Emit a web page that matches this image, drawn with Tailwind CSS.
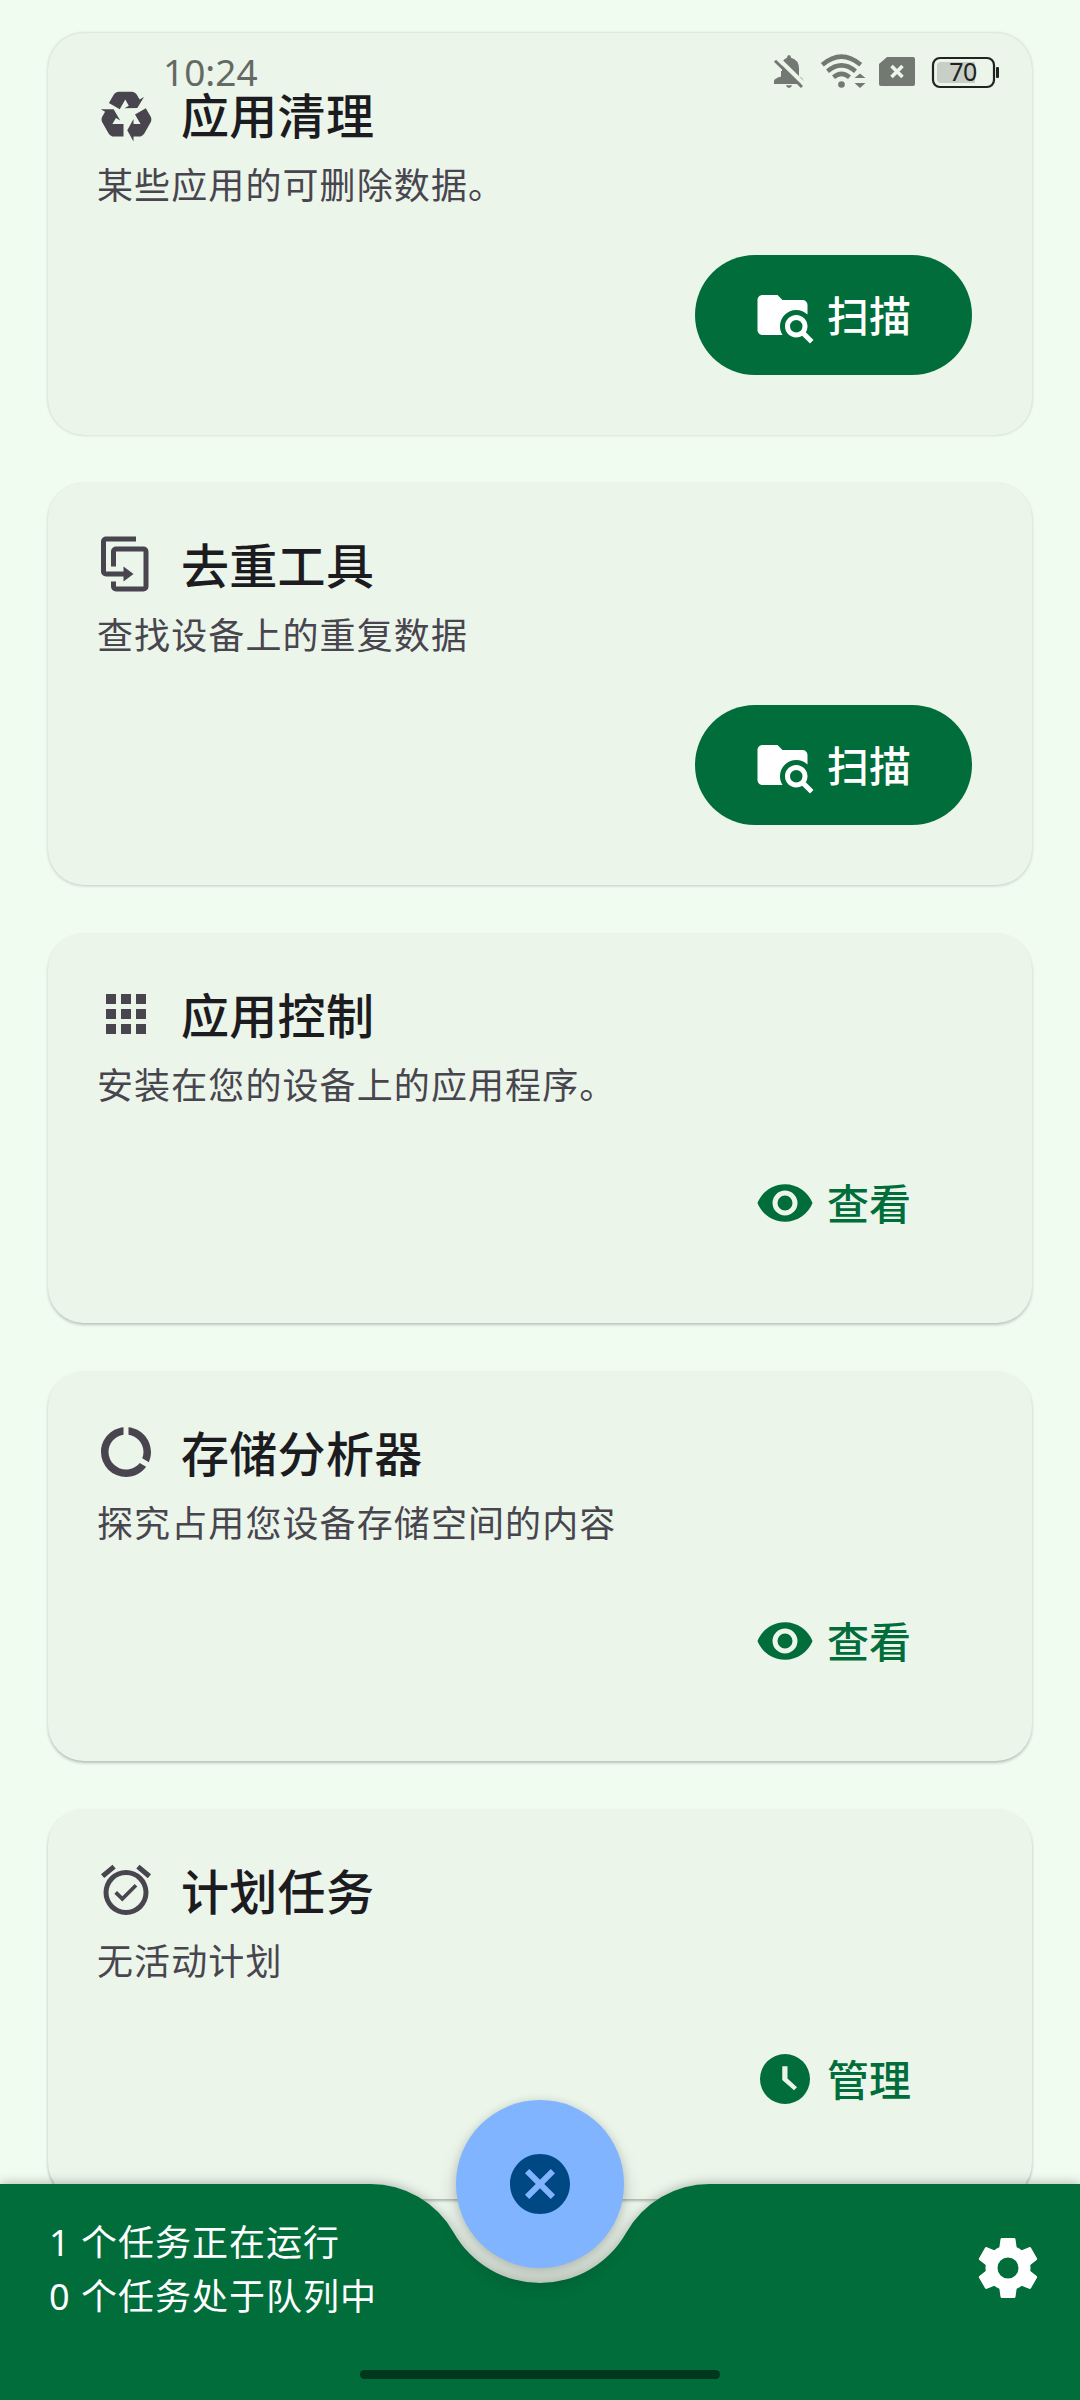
<!DOCTYPE html>
<html lang="zh-CN">
<head>
<meta charset="utf-8">
<title>SD Maid</title>
<script src="https://cdn.jsdelivr.net/npm/@tailwindcss/browser@4"></script>
</head>
<body class="relative h-[2400px] w-[1080px] overflow-hidden bg-[#f1fcf1] font-['Noto_Sans','Noto_Sans_CJK_SC',sans-serif] text-[#1c1b1f]">

<svg class="hidden">
  <symbol id="scan" viewBox="0 0 24 24"><path d="M16.5,12C19,12 21,14 21,16.5C21,17.38 20.75,18.21 20.31,18.9L23.39,22L22,23.39L18.88,20.32C18.19,20.75 17.37,21 16.5,21C14,21 12,19 12,16.5C12,14 14,12 16.5,12M16.5,14A2.5,2.5 0 0,0 14,16.5A2.5,2.5 0 0,0 16.5,19A2.5,2.5 0 0,0 19,16.5A2.5,2.5 0 0,0 16.5,14M9,4L11,6H19A2,2 0 0,1 21,8V11.81C19.83,10.69 18.25,10 16.5,10A6.5,6.5 0 0,0 10,16.5C10,17.79 10.37,19 11,20H3C1.89,20 1,19.1 1,18V6C1,4.89 1.89,4 3,4H9Z"/></symbol>
  <symbol id="eye" viewBox="0 0 24 24"><path d="M12,9A3,3 0 0,0 9,12A3,3 0 0,0 12,15A3,3 0 0,0 15,12A3,3 0 0,0 12,9M12,17A5,5 0 0,1 7,12A5,5 0 0,1 12,7A5,5 0 0,1 17,12A5,5 0 0,1 12,17M12,4.5C7,4.5 2.73,7.61 1,12C2.73,16.39 7,19.5 12,19.5C17,19.5 21.27,16.39 23,12C21.27,7.61 17,4.5 12,4.5Z"/></symbol>
</svg>

<main class="flex flex-col gap-12 px-12 pt-[33px]">
  <section class="flex h-[402px] flex-col rounded-[36px] bg-[#ebf5ea] px-12 pt-[51px] shadow-[0_0_3px_rgba(0,0,0,0.22)]">
    <div class="flex h-[60px] items-center gap-6">
      <svg class="size-[60px] fill-[#49454e]" viewBox="0 0 24 24"><path d="M21.82,15.42L19.32,19.75C18.83,20.61 17.92,21.06 17,21H15V23L12.5,18.5L15,14V16H17.82L15.6,12.15L19.93,9.65L21.73,12.77C22.25,13.54 22.32,14.57 21.82,15.42M9.21,3.06H14.21C15.19,3.06 16.04,3.63 16.45,4.45L17.45,6.19L19.18,5.19L16.54,9.6L11.39,9.69L13.12,8.69L11.71,6.24L9.5,10.09L5.16,7.59L6.96,4.47C7.37,3.64 8.22,3.06 9.21,3.06M5.05,19.76L2.55,15.43C2.06,14.58 2.13,13.56 2.64,12.79L3.64,11.06L1.91,10.06L7.05,10.14L9.7,14.56L7.97,13.56L6.56,16H11V21H7.4C6.47,21.07 5.55,20.61 5.05,19.76Z"/></svg>
      <h2 class="pt-[3px] pl-px text-[48px] leading-[60px] font-medium tracking-[0.3px]">应用清理</h2>
    </div>
    <p class="mt-[18px] pl-px text-[36px] leading-[48px] tracking-[1.1px] text-[#49454e]">某些应用的可删除数据。</p>
    <button class="mt-[45px] mr-3 flex h-[120px] w-[277px] items-center gap-3 self-end rounded-full bg-[#006d3b] pl-[60px] text-[42px] font-medium text-white"><svg class="size-[60px] fill-white"><use href="#scan"/></svg>扫描</button>
  </section>

  <section class="flex h-[402px] flex-col rounded-[36px] bg-[#ebf5ea] px-12 pt-[51px] shadow-[0_1px_3px_rgba(0,0,0,0.2)]">
    <div class="flex h-[60px] items-center gap-6">
      <svg class="size-[60px] fill-[#49454e]" viewBox="0 0 24 24"><path d="M11,17H4A2,2 0 0,1 2,15V3A2,2 0 0,1 4,1H16V3H4V15H11V13L15,16L11,19V17M19,21V7H8V13H6V7A2,2 0 0,1 8,5H19A2,2 0 0,1 21,7V21A2,2 0 0,1 19,23H8A2,2 0 0,1 6,21V19H8V21H19Z"/></svg>
      <h2 class="pt-[3px] pl-px text-[48px] leading-[60px] font-medium tracking-[0.3px]">去重工具</h2>
    </div>
    <p class="mt-[18px] pl-px text-[36px] leading-[48px] tracking-[1.1px] text-[#49454e]">查找设备上的重复数据</p>
    <button class="mt-[45px] mr-3 flex h-[120px] w-[277px] items-center gap-3 self-end rounded-full bg-[#006d3b] pl-[60px] text-[42px] font-medium text-white"><svg class="size-[60px] fill-white"><use href="#scan"/></svg>扫描</button>
  </section>

  <section class="flex h-[390px] flex-col rounded-[36px] bg-[#ebf5ea] px-12 pt-[51px] shadow-[0_2px_3px_rgba(0,0,0,0.22)]">
    <div class="flex h-[60px] items-center gap-6">
      <svg class="size-[60px] fill-[#49454e]" viewBox="0 0 24 24"><path d="M16,20H20V16H16M16,14H20V10H16M10,8H14V4H10M16,8H20V4H16M10,14H14V10H10M4,14H8V10H4M4,20H8V16H4M10,20H14V16H10M4,8H8V4H4V8Z"/></svg>
      <h2 class="pt-[3px] pl-px text-[48px] leading-[60px] font-medium tracking-[0.3px]">应用控制</h2>
    </div>
    <p class="mt-[18px] pl-px text-[36px] leading-[48px] tracking-[1.1px] text-[#49454e]">安装在您的设备上的应用程序。</p>
    <button class="mt-[33px] mr-3 flex h-[120px] w-[277px] items-center gap-3 self-end pl-[60px] text-[42px] font-medium text-[#006d3b]"><svg class="size-[60px] fill-[#006d3b]"><use href="#eye"/></svg>查看</button>
  </section>

  <section class="flex h-[390px] flex-col rounded-[36px] bg-[#ebf5ea] px-12 pt-[51px] shadow-[0_2px_3px_rgba(0,0,0,0.24)]">
    <div class="flex h-[60px] items-center gap-6">
      <svg class="size-[60px] fill-[#49454e]" viewBox="0 0 24 24"><path d="M13,2.05V5.08C16.39,5.57 19,8.47 19,12C19,12.9 18.82,13.75 18.5,14.54L21.12,16.07C21.68,14.83 22,13.45 22,12C22,6.82 18.05,2.55 13,2.05M12,19A7,7 0 0,1 5,12C5,8.47 7.61,5.57 11,5.08V2.05C5.94,2.55 2,6.81 2,12A10,10 0 0,0 12,22C15.3,22 18.23,20.39 20.05,17.91L17.45,16.38C16.17,18 14.21,19 12,19Z"/></svg>
      <h2 class="pt-[3px] pl-px text-[48px] leading-[60px] font-medium tracking-[0.3px]">存储分析器</h2>
    </div>
    <p class="mt-[18px] pl-px text-[36px] leading-[48px] tracking-[1.1px] text-[#49454e]">探究占用您设备存储空间的内容</p>
    <button class="mt-[33px] mr-3 flex h-[120px] w-[277px] items-center gap-3 self-end pl-[60px] text-[42px] font-medium text-[#006d3b]"><svg class="size-[60px] fill-[#006d3b]"><use href="#eye"/></svg>查看</button>
  </section>

  <section class="flex h-[390px] flex-col rounded-[36px] bg-[#ebf5ea] px-12 pt-[51px] shadow-[0_2px_3px_rgba(0,0,0,0.28)]">
    <div class="flex h-[60px] items-center gap-6">
      <svg class="size-[60px] fill-[#49454e]" viewBox="0 0 24 24"><path d="M10.54,14.53L8.41,12.4L7.35,13.46L10.53,16.64L16.53,10.64L15.47,9.58L10.54,14.53M12,20A7,7 0 0,1 5,13A7,7 0 0,1 12,6A7,7 0 0,1 19,13A7,7 0 0,1 12,20M12,4A9,9 0 0,0 3,13A9,9 0 0,0 12,22A9,9 0 0,0 21,13A9,9 0 0,0 12,4M7.88,3.39L6.6,1.86L2,5.71L3.29,7.24L7.88,3.39M22,5.72L17.4,1.86L16.11,3.39L20.71,7.25L22,5.72Z"/></svg>
      <h2 class="pt-[3px] pl-px text-[48px] leading-[60px] font-medium tracking-[0.3px]">计划任务</h2>
    </div>
    <p class="mt-[18px] pl-px text-[36px] leading-[48px] tracking-[1.1px] text-[#49454e]">无活动计划</p>
    <button class="mt-[33px] mr-3 flex h-[120px] w-[277px] items-center gap-3 self-end pl-[60px] text-[42px] font-medium text-[#006d3b]"><svg class="size-[60px] fill-[#006d3b]" viewBox="0 0 24 24"><path fill-rule="evenodd" d="M12 2A10 10 0 1 0 12 22A10 10 0 1 0 12 2M15.6 16.5L10.9 12.4V6.9H13V11.8L16.8 15.3Z"/></svg>管理</button>
  </section>
</main>

<!-- status bar over the scrolled list -->
<header class="absolute inset-x-0 top-0 flex h-[96px] items-center justify-between pt-12 pr-[81px] pb-0 pl-[163px]">
  <time class="text-[37px] leading-[48px] text-[#646a63]">10:24</time>
  <svg class="h-12 w-[229px]" viewBox="770 48 229 48">
    <path fill="#737972" d="M781 79V68Q781 60 787 57.700Q787 55 789 55Q791 55 791 57.700Q799 60 799 68.500V76.500Q804 78 804 84H774V81Q774 78.500 781 76.500zM786 85.300h6q-.5 2.700-3 2.700t-3-2.700z"/>
    <path d="M777.500 58L804.500 84.500" stroke="#ebf5ea" stroke-width="4.500"/>
    <path d="M781 71V62L777 60" stroke="#ebf5ea" stroke-width="2" fill="none"/>
    <path d="M775 60.700L802 87" stroke="#737972" stroke-width="3"/>
    <g fill="none" stroke="#737972" stroke-width="4.500">
      <path d="M822.300 64.800Q841.500 48.500 860.700 64.800"/><path d="M827.500 71.200Q841.500 59.500 855.500 71.200"/><path d="M833.500 77.300Q841.500 70.500 849.500 77.300"/>
    </g>
    <circle cx="841.500" cy="84.500" r="3.300" fill="#737972"/>
    <path d="M854.500 78l5.500-4.500 5.500 4.500zM854.500 83l5.500 5 5.500-5z" fill="#737972"/>
    <path d="M887 57h26q2 0 2 2v25q0 2-2 2h-32q-2 0-2-2V64z" fill="#737972"/>
    <path d="M891.500 66l11 11m0-11l-11 11" stroke="#ebf5ea" stroke-width="3.600"/>
    <rect x="933" y="58" width="61" height="29" rx="7" fill="none" stroke="#20231f" stroke-width="2.200"/>
    <path d="M941 62H975V83H941Q937 83 937 79V66Q937 62 941 62" fill="#c7cfc6"/>
    <rect x="996" y="67" width="3" height="11" rx="1" fill="#20231f"/>
    <text x="963" y="81" text-anchor="middle" font-size="25" letter-spacing="-0.500" fill="#20231f">70</text>
  </svg>
</header>

<!-- bottom app bar with cradle -->
<footer class="absolute inset-x-0 bottom-0 h-[216px]">
  <svg class="absolute inset-0 h-[216px] w-[1080px] overflow-visible drop-shadow-[0_0_6px_rgba(0,0,0,0.3)]" viewBox="0 0 1080 216"><path fill="#006d3b" d="M0 0H370.300A96 96 0 0 1 453.800 48.700A99 99 0 0 0 626.200 48.700A96 96 0 0 1 709.700 0H1080V216H0Z"/></svg>
  <div class="relative flex items-start justify-between pt-[32px] pr-9 pl-[49px]">
    <p class="text-[36px] leading-[54px] tracking-[1px] text-white">1 个任务正在运行<br>0 个任务处于队列中</p>
    <svg class="mt-[16px] size-[72px] fill-white" viewBox="0 0 24 24"><path d="M12,15.5A3.5,3.5 0 0,1 8.5,12A3.5,3.5 0 0,1 12,8.5A3.5,3.5 0 0,1 15.5,12A3.5,3.5 0 0,1 12,15.5M19.43,12.97C19.47,12.65 19.5,12.33 19.5,12C19.5,11.67 19.47,11.34 19.43,11L21.54,9.37C21.73,9.22 21.78,8.95 21.66,8.73L19.66,5.27C19.54,5.05 19.27,4.96 19.05,5.05L16.56,6.05C16.04,5.66 15.5,5.32 14.87,5.07L14.5,2.42C14.46,2.18 14.25,2 14,2H10C9.75,2 9.54,2.18 9.5,2.42L9.13,5.07C8.5,5.32 7.96,5.66 7.44,6.05L4.95,5.05C4.73,4.96 4.46,5.05 4.34,5.27L2.34,8.73C2.21,8.95 2.27,9.22 2.46,9.37L4.57,11C4.53,11.34 4.5,11.67 4.5,12C4.5,12.33 4.53,12.65 4.57,12.97L2.46,14.63C2.27,14.78 2.21,15.05 2.34,15.27L4.34,18.73C4.46,18.95 4.73,19.03 4.95,18.95L7.44,17.94C7.96,18.34 8.5,18.68 9.13,18.93L9.5,21.58C9.54,21.82 9.75,22 10,22H14C14.25,22 14.46,21.82 14.5,21.58L14.87,18.93C15.5,18.67 16.04,18.34 16.56,17.94L19.05,18.95C19.27,19.03 19.54,18.95 19.66,18.73L21.66,15.27C21.78,15.05 21.73,14.78 21.54,14.63L19.43,12.97Z"/></svg>
  </div>
  <button class="absolute -top-[84px] left-[456px] flex size-[168px] items-center justify-center rounded-full bg-[#80b4ff] shadow-[0_14px_20px_rgba(0,0,0,0.2),0_0_8px_rgba(0,0,0,0.12)]">
    <svg class="size-[72px] fill-[#004883]" viewBox="0 0 24 24"><path d="M12,2C17.53,2 22,6.47 22,12C22,17.53 17.53,22 12,22C6.47,22 2,17.53 2,12C2,6.47 6.47,2 12,2M15.59,7L12,10.59L8.41,7L7,8.41L10.59,12L7,15.59L8.41,17L12,13.41L15.59,17L17,15.59L13.41,12L17,8.41L15.59,7Z"/></svg>
  </button>
  <div class="absolute bottom-[21px] left-[360px] h-[9px] w-[360px] rounded-full bg-[#00371d]"></div>
</footer>
</body>
</html>
